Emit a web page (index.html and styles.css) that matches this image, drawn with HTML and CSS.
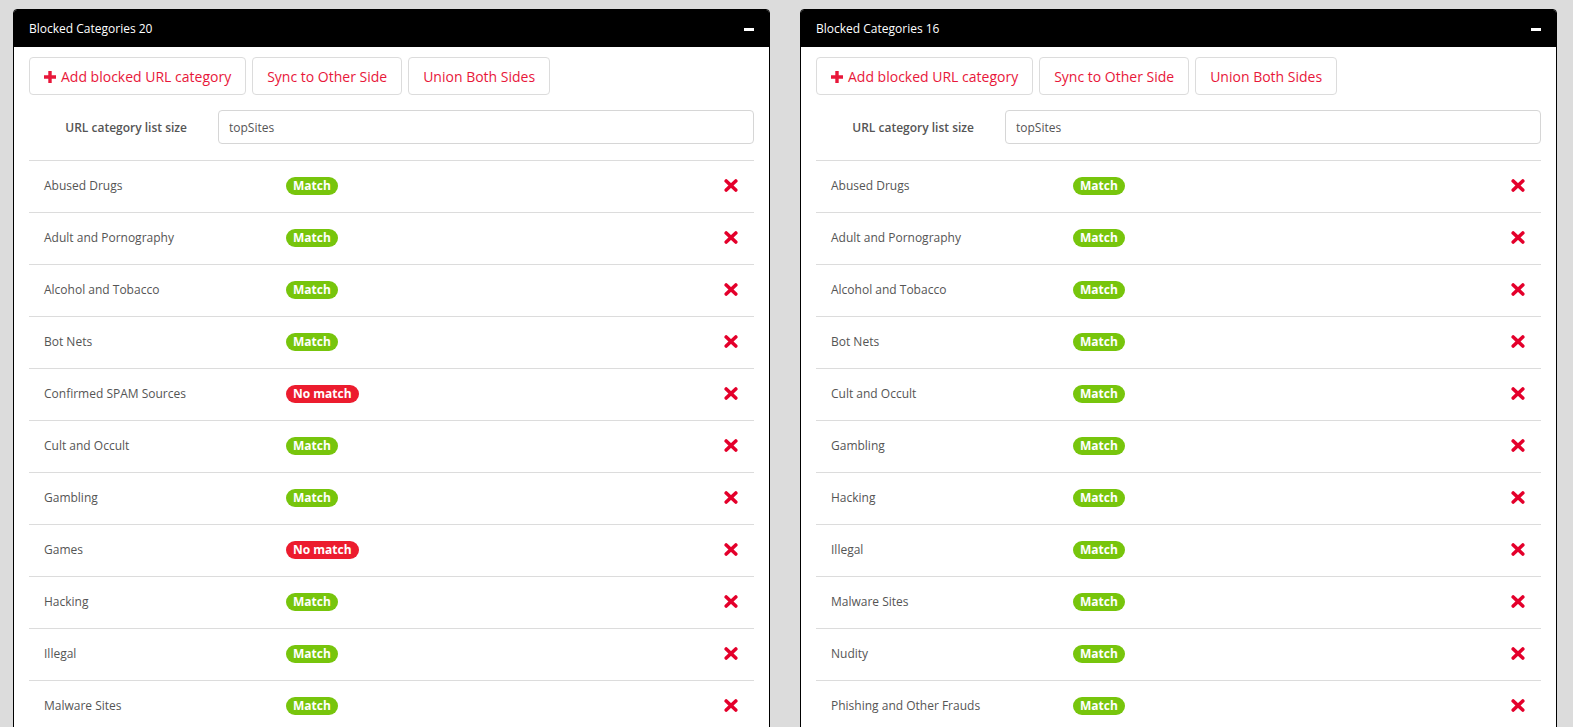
FILE: index.html
```html
<!DOCTYPE html>
<html lang="en">
  <head>
    <meta charset="UTF-8" />
    <title>Blocked Categories</title>
    <link rel="stylesheet" href="styles.css">
  </head>
  <body>
    <div class="page">
      <div class="panel">
        <div class="panel-head">
          <span class="panel-title">Blocked Categories 20</span>
          <span class="collapse"></span>
        </div>
        <div class="panel-body">
          <div class="btn-row">
            <button class="btn">
              <svg class="plus" width="12" height="12" viewBox="0 0 12 12"><path d="M4.3 0h3.4v4.3H12v3.4H7.7V12H4.3V7.7H0V4.3h4.3z" fill="#e8173a"/></svg>
              Add blocked URL category
            </button>
            <button class="btn">Sync to Other Side</button>
            <button class="btn">Union Both Sides</button>
          </div>
          <div class="size-row">
            <label class="size-label">URL category list size</label>
            <input class="size-input" type="text" value="topSites" />
          </div>
          <div class="list" id="listLeft"></div>
        </div>
      </div>

      <div class="panel">
        <div class="panel-head">
          <span class="panel-title">Blocked Categories 16</span>
          <span class="collapse"></span>
        </div>
        <div class="panel-body">
          <div class="btn-row">
            <button class="btn">
              <svg class="plus" width="12" height="12" viewBox="0 0 12 12"><path d="M4.3 0h3.4v4.3H12v3.4H7.7V12H4.3V7.7H0V4.3h4.3z" fill="#e8173a"/></svg>
              Add blocked URL category
            </button>
            <button class="btn">Sync to Other Side</button>
            <button class="btn">Union Both Sides</button>
          </div>
          <div class="size-row">
            <label class="size-label">URL category list size</label>
            <input class="size-input" type="text" value="topSites" />
          </div>
          <div class="list" id="listRight"></div>
        </div>
      </div>
    </div>

    <script>
      // only the rows that fit in the window
      const left = [
        ["Abused Drugs", true],
        ["Adult and Pornography", true],
        ["Alcohol and Tobacco", true],
        ["Bot Nets", true],
        ["Confirmed SPAM Sources", false],
        ["Cult and Occult", true],
        ["Gambling", true],
        ["Games", false],
        ["Hacking", true],
        ["Illegal", true],
        ["Malware Sites", true],
      ];
      const right = [
        ["Abused Drugs", true],
        ["Adult and Pornography", true],
        ["Alcohol and Tobacco", true],
        ["Bot Nets", true],
        ["Cult and Occult", true],
        ["Gambling", true],
        ["Hacking", true],
        ["Illegal", true],
        ["Malware Sites", true],
        ["Nudity", true],
        ["Phishing and Other Frauds", true],
      ];

      const xIcon =
        '<svg width="14" height="13" viewBox="0 0 14 13"><path d="M2.2 2 L11.8 11 M11.8 2 L2.2 11" stroke="#e4002b" stroke-width="3.6" stroke-linecap="round"/></svg>';

      function fill(id, rows) {
        const list = document.getElementById(id);
        rows.forEach(function (r) {
          const row = document.createElement("div");
          row.className = "row";
          row.innerHTML =
            '<span class="name">' + r[0] + "</span>" +
            '<span class="badge ' + (r[1] ? "ok" : "bad") + '">' +
            (r[1] ? "Match" : "No match") + "</span>" +
            '<span class="remove">' + xIcon + "</span>";
          list.appendChild(row);
        });
      }

      fill("listLeft", left);
      fill("listRight", right);
    </script>
  </body>
</html>
```

FILE: styles.css
```css
body {
  margin: 0;
  background-color: #dcdcdc;
  font-family: "Open Sans", sans-serif;
  overflow: hidden;
}

.page {
  display: flex;
  gap: 30px;
  padding: 9px 0 0 13px;
}

.panel {
  width: 757px;
  box-sizing: border-box;
  border: 1px solid #000;
  border-radius: 4px 4px 0 0;
  background-color: #fff;
  flex-shrink: 0;
}

.panel-head {
  height: 37px;
  background-color: #000;
  border-radius: 3px 3px 0 0;
  display: flex;
  align-items: center;
  justify-content: space-between;
  padding: 0 15px;
}

.panel-title {
  color: #fff;
  font-size: 12px;
  font-weight: 400;
}

.collapse {
  width: 10px;
  height: 3px;
  background-color: #fff;
  margin-top: 2px;
}

.panel-body {
  padding: 10px 15px 0 15px;
}

.btn-row {
  display: flex;
  gap: 6px;
}

.btn {
  height: 38px;
  padding: 0 14px;
  border: 1px solid #dcdcdc;
  border-radius: 4px;
  background-color: #fff;
  color: #e8173a;
  font-family: "Open Sans", sans-serif;
  font-size: 14px;
  display: flex;
  align-items: center;
  gap: 5px;
}

.plus {
  margin-top: 1px;
}

.size-row {
  display: flex;
  align-items: center;
  margin-top: 15px;
}

.size-label {
  width: 189px;
  flex-shrink: 0;
  box-sizing: border-box;
  padding-right: 31px;
  text-align: right;
  font-size: 12px;
  font-weight: 600;
  color: #555;
}

.size-input {
  flex: 1;
  height: 34px;
  box-sizing: border-box;
  border: 1px solid #d6d6d6;
  border-radius: 4px;
  padding: 0 10px;
  font-family: "Open Sans", sans-serif;
  font-size: 12px;
  color: #555;
}

.list {
  margin-top: 16px;
}

.row {
  height: 51px;
  border-top: 1px solid #dcdcdc;
  display: flex;
  align-items: center;
}

.name {
  width: 257px;
  flex-shrink: 0;
  box-sizing: border-box;
  padding-left: 15px;
  font-size: 12px;
  color: #555;
  margin-top: -3px;
}

.badge {
  height: 18px;
  line-height: 18px;
  padding: 0 7px;
  border-radius: 9px;
  color: #fff;
  font-size: 12px;
  font-weight: 700;
  margin-top: -2px;
}

.badge.ok {
  background-color: #77c50c;
}

.badge.bad {
  background-color: #ec1c2e;
}

.remove {
  margin-left: auto;
  padding-right: 16px;
  display: flex;
  margin-top: -2px;
}
```
